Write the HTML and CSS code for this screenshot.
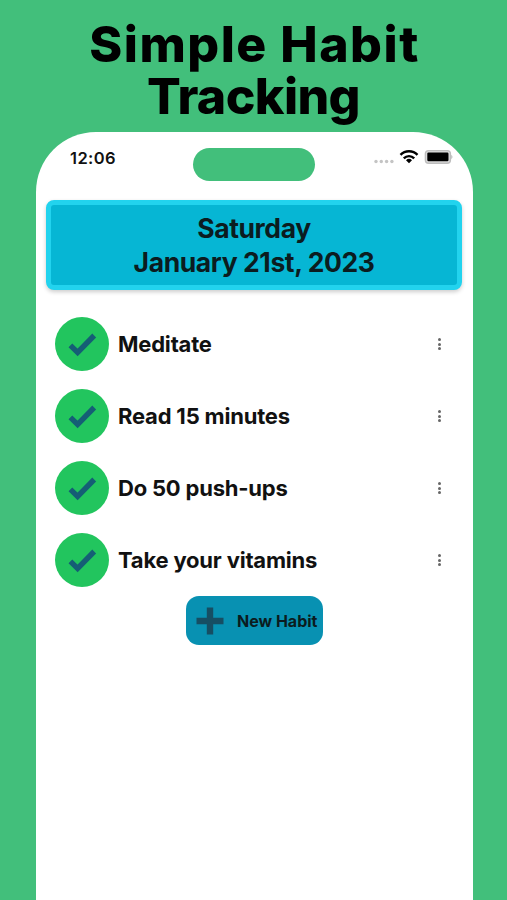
FILE: index.html
```html
<!DOCTYPE html>
<html lang="en">
<head>
    <meta charset="UTF-8">
    <meta name="viewport" content="width=device-width, initial-scale=1.0">
    <title>Simple Habit Tracking</title>
    <link rel="stylesheet" href="styles.css">
</head>
<body>

    <h1 class="headline">
        <span class="line-one">Simple Habit</span>
        <span class="line-two">Tracking</span>
    </h1>

    <div class="phone">
        <!-- Status bar -->
        <div class="status-bar">
            <span class="time">12:06</span>
            <div class="island"></div>
            <svg class="status-icons" width="80" height="18" viewBox="0 0 80 18">
                <g fill="#c4c4c4">
                    <circle cx="3" cy="13.5" r="1.7"/>
                    <circle cx="8.3" cy="13.5" r="1.7"/>
                    <circle cx="13.6" cy="13.5" r="1.7"/>
                    <circle cx="18.9" cy="13.5" r="1.7"/>
                </g>
                <g fill="none" stroke="#000" stroke-width="2.4">
                    <path d="M27.5 6.8a11.8 11.8 0 0 1 17 0"/>
                    <path d="M30.8 10.3a7.2 7.2 0 0 1 10.4 0"/>
                </g>
                <path d="M36 15.2L33 12.2a4.3 4.3 0 0 1 6 0z" fill="#000"/>
                <rect x="52.4" y="2.6" width="25" height="12.6" rx="3.2" fill="#ddd" stroke="#bdbdbd" stroke-width="1.4"/>
                <rect x="54.3" y="4.5" width="21.2" height="8.8" rx="1.2" fill="#000"/>
                <path d="M78.2 6.8q2.6 2.2 0 4.4z" fill="#bdbdbd"/>
            </svg>
        </div>

        <!-- Date -->
        <div class="date-card">
            <div class="day">Saturday</div>
            <div class="date">January 21st, 2023</div>
        </div>

        <!-- Habits -->
        <ul class="habits">
            <li class="habit">
                <span class="check"><svg width="54" height="54" viewBox="0 0 54 54"><path d="M15.4 28.4L22.6 35.4L39.2 18.5"/></svg></span>
                <span class="name">Meditate</span>
                <span class="menu"><i></i><i></i><i></i></span>
            </li>
            <li class="habit">
                <span class="check"><svg width="54" height="54" viewBox="0 0 54 54"><path d="M15.4 28.4L22.6 35.4L39.2 18.5"/></svg></span>
                <span class="name">Read 15 minutes</span>
                <span class="menu"><i></i><i></i><i></i></span>
            </li>
            <li class="habit">
                <span class="check"><svg width="54" height="54" viewBox="0 0 54 54"><path d="M15.4 28.4L22.6 35.4L39.2 18.5"/></svg></span>
                <span class="name">Do 50 push-ups</span>
                <span class="menu"><i></i><i></i><i></i></span>
            </li>
            <li class="habit">
                <span class="check"><svg width="54" height="54" viewBox="0 0 54 54"><path d="M15.4 28.4L22.6 35.4L39.2 18.5"/></svg></span>
                <span class="name">Take your vitamins</span>
                <span class="menu"><i></i><i></i><i></i></span>
            </li>
        </ul>

        <button class="new-habit">
            <svg width="28" height="28" viewBox="0 0 28 28"><path d="M14 .5v27M.5 14h27"/></svg>
            <span>New Habit</span>
        </button>
    </div>

</body>
</html>
```
FILE: styles.css
```css
* {
    margin: 0;
    padding: 0;
    box-sizing: border-box;
}

body {
    height: 900px;
    overflow: hidden;
    background: #42bf7b;
    color: #111;
    font-family: "Inter", "Liberation Sans", sans-serif;
}

/* Headline */
.headline {
    height: 132px;
    padding-top: 18px;
    font-size: 50px;
    font-weight: 800;
    line-height: 52px;
    text-align: center;
    color: #000;
}

.headline span {
    display: block;
    white-space: nowrap;
}

.line-one {
    padding-left: 2px;
    letter-spacing: 1.5px;
}

.line-two { letter-spacing: -0.6px; }

/* Phone */
.phone {
    width: 437px;
    height: 768px;
    margin-left: 36px;
    padding: 0 11px 0 10px;
    background: #fff;
    border-radius: 60px 60px 0 0;
}

.status-bar {
    display: flex;
    align-items: flex-start;
    height: 68px;
    padding-top: 16px;
}

.time {
    width: 147px;
    padding-left: 24px;
    font-size: 16.5px;
    font-weight: 600;
    line-height: 20px;
    letter-spacing: 0.4px;
}

.island {
    width: 122px;
    height: 33px;
    border-radius: 17px;
    background: #42bf7b;
}

.status-icons {
    margin-left: 58px;
}

/* Date card */
.date-card {
    height: 90px;
    padding-top: 6px;
    border: 5px solid #22d3ee;
    border-radius: 8px;
    background: #06b6d4;
    box-shadow: 0 2px 4px rgba(0, 0, 0, 0.2);
    font-size: 26.5px;
    font-weight: 700;
    line-height: 34px;
    letter-spacing: -0.4px;
    text-align: center;
    white-space: nowrap;
    color: #0b1c20;
}

/* Habit list */
.habits {
    padding: 27px 0 0 9px;
    list-style: none;
}

.habit {
    display: flex;
    align-items: center;
    height: 54px;
    margin-bottom: 18px;
}

.check {
    width: 54px;
    height: 54px;
    border-radius: 50%;
    background: #22c55e;
}

.check path {
    fill: none;
    stroke: #155e75;
    stroke-width: 5.4;
}

.name {
    flex: 1;
    padding: 0 0 1px 9px;
    font-size: 22px;
    font-weight: 700;
    letter-spacing: -0.2px;
    white-space: nowrap;
}

.menu {
    display: flex;
    flex-direction: column;
    gap: 1.6px;
    width: 3px;
    margin-right: 21px;
}

.menu i {
    height: 3px;
    border-radius: 50%;
    background: #666;
}

/* New habit button */
.new-habit {
    display: flex;
    align-items: center;
    width: 137px;
    height: 49px;
    margin: -9px 0 0 140px;
    padding-left: 10px;
    border: none;
    border-radius: 13px;
    background: #0891b2;
    color: #0b1c20;
    font-family: inherit;
    font-size: 16px;
    font-weight: 700;
    white-space: nowrap;
}

.new-habit span {
    padding-left: 13px;
}

.new-habit path {
    fill: none;
    stroke: #164e63;
    stroke-width: 6.4;
}
```
